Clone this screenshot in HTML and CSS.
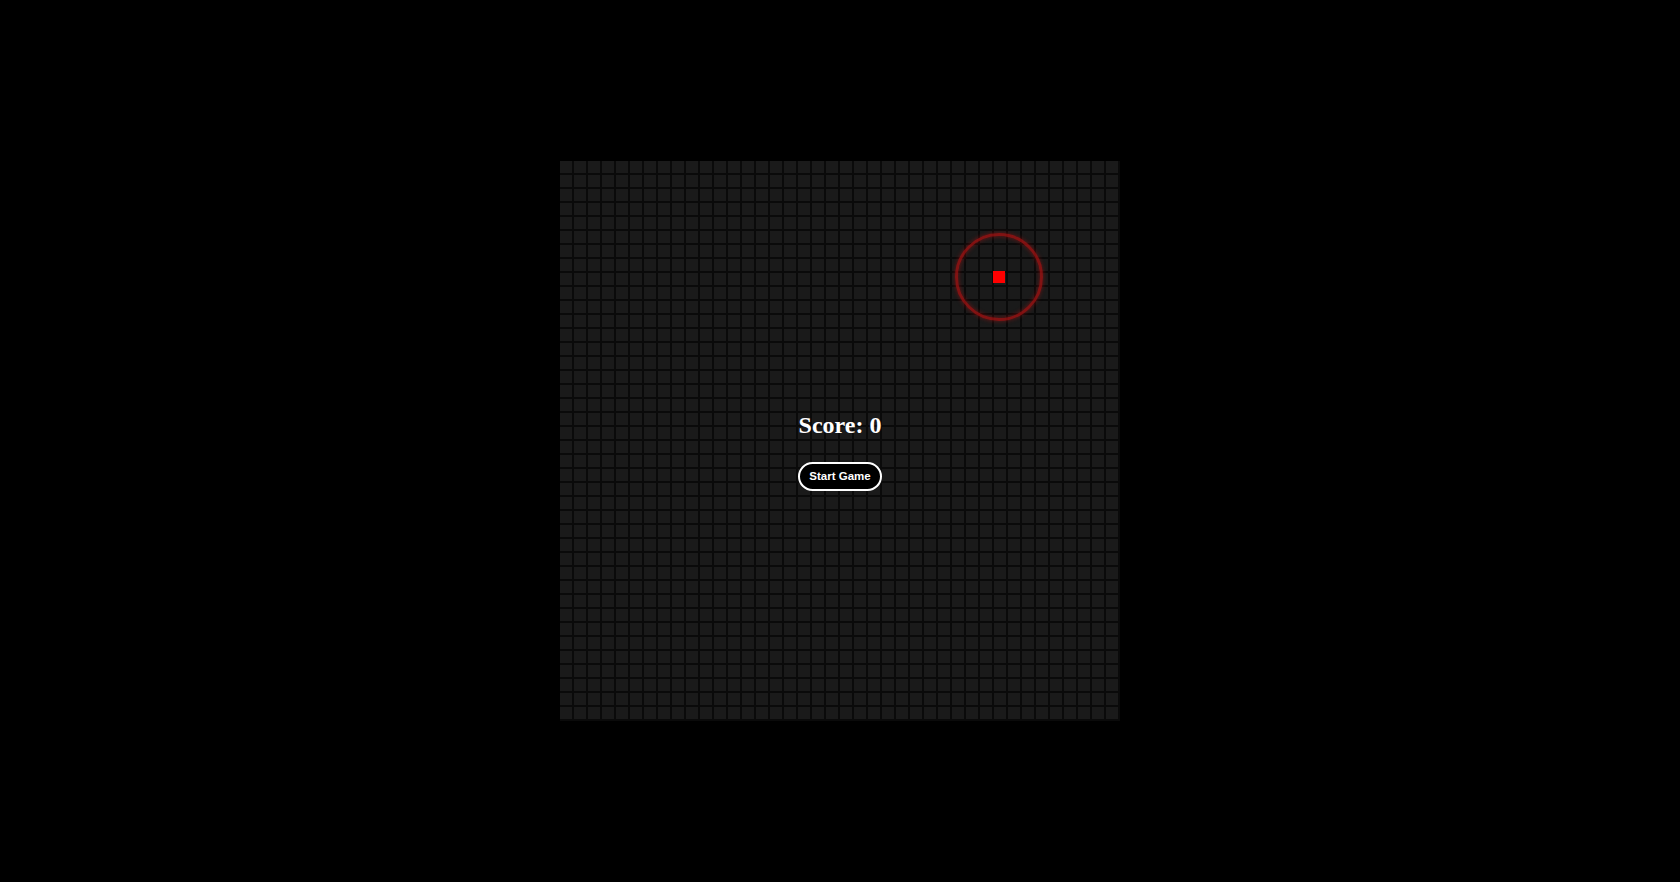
FILE: index.html
```html
<!DOCTYPE html>
<html lang="en">
<head>
<meta charset="utf-8">
<title>Snake</title>
<link rel="stylesheet" href="styles.css">
</head>
<body>
<main class="stage">
  <div class="board">
    <div class="food-ring"></div>
    <div class="food"></div>
    <div class="overlay">
      <h2 class="score">Score: 0</h2>
      <button class="start-btn" type="button">Start Game</button>
    </div>
  </div>
</main>
</body>
</html>
```

FILE: styles.css
```css
html, body {
  margin: 0;
  padding: 0;
  background: #000;
  height: 100%;
}

.stage {
  height: 100vh;
  display: flex;
  align-items: center;
  justify-content: center;
}

.board {
  position: relative;
  width: 560px;
  height: 560px;
  background-color: #1a1a1a;
  background-image:
    linear-gradient(to right, #0a0a0a 2px, transparent 2px),
    linear-gradient(to bottom, #0a0a0a 2px, transparent 2px);
  background-size: 14px 14px;
  background-position: -2px -2px;
}

.food {
  position: absolute;
  left: 433px;
  top: 110px;
  width: 12px;
  height: 12px;
  background: #ff0000;
}

.food-ring {
  position: absolute;
  left: 395px;
  top: 72px;
  width: 82px;
  height: 82px;
  border: 3px solid rgba(165, 18, 18, 0.75);
  border-radius: 50%;
  box-shadow: 0 0 4px rgba(165, 18, 18, 0.6), inset 0 0 4px rgba(165, 18, 18, 0.6);
}

.overlay {
  position: absolute;
  inset: 0;
  display: flex;
  flex-direction: column;
  align-items: center;
  justify-content: center;
  padding-top: 19px;
}

.score {
  margin: 0 0 23px;
  font-family: "Liberation Serif", "Times New Roman", serif;
  font-size: 24px;
  font-weight: bold;
  color: #fff;
  line-height: 28px;
}

.start-btn {
  font-family: "Liberation Sans", Arial, sans-serif;
  font-size: 11.5px;
  font-weight: bold;
  color: #fff;
  background: #000;
  border: 2px solid #fff;
  border-radius: 999px;
  padding: 6px 9px;
  line-height: 13px;
  cursor: pointer;
}
```
